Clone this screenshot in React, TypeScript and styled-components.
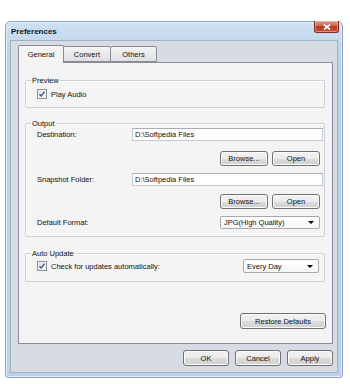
import React from "react";
import styled, { createGlobalStyle } from "styled-components";

const GlobalStyle = createGlobalStyle`
  html, body {
    margin: 0;
    background: #ffffff;
  }
  body {
    font-family: "Liberation Sans", Arial, sans-serif;
    font-size: 7.5px;
    color: #111;
  }
`;

const Window = styled.div`
  box-sizing: border-box;
  width: 338px;
  height: 357px;
  margin: 21px 0 0 5px;
  padding: 0 4px 4px;
  display: flex;
  flex-direction: column;
  border: 1px solid #8ba3c1;
  border-radius: 5px 5px 3px 3px;
  background: linear-gradient(#cfe0f2, #b9d1ea 40px);
  box-shadow: inset 0 0 0 1px #e4eef9;
`;

const TitleBar = styled.div`
  height: 18px;
  display: flex;
  justify-content: space-between;
  align-items: flex-start;
  padding-left: 1px;
`;

const Title = styled.div`
  margin-top: 5px;
  font-size: 8px;
  font-weight: bold;
  line-height: 10px;
  color: #0b1622;
`;

const CloseButton = styled.div`
  box-sizing: border-box;
  width: 25px;
  height: 12px;
  margin: -1px -1px 0 0;
  display: flex;
  align-items: center;
  justify-content: center;
  border: 1px solid #7e2c20;
  border-top: none;
  border-radius: 0 0 3px 3px;
  background: linear-gradient(#e39a8b, #cf6350 45%, #b9341f 52%, #c9553b);
  box-shadow: inset 0 0 0 1px rgba(255, 200, 190, 0.5);
`;

const Client = styled.div`
  box-sizing: border-box;
  flex: 1;
  display: flex;
  flex-direction: column;
  padding: 4px 4px 0 7px;
  border: 1px solid #9fb2c8;
  background: #d7dbe3;
`;

const TabRow = styled.div`
  height: 17px;
  display: flex;
`;

const Tab = styled.div<{ $active?: boolean; $w: number }>`
  box-sizing: border-box;
  position: relative;
  z-index: ${(p) => (p.$active ? 2 : 1)};
  width: ${(p) => p.$w}px;
  height: ${(p) => (p.$active ? 18 : 16)}px;
  margin-top: ${(p) => (p.$active ? 0 : 1)}px;
  display: flex;
  align-items: center;
  justify-content: center;
  border: 1px solid #898c95;
  border-bottom: ${(p) => (p.$active ? "none" : "1px solid #898c95")};
  border-radius: 2px 2px 0 0;
  background: ${(p) =>
    p.$active ? "#f4f4f4" : "linear-gradient(#f3f3f3, #e0e0e0)"};
  & + & {
    margin-left: -1px;
  }
`;

const Panel = styled.div`
  box-sizing: border-box;
  position: relative;
  z-index: 0;
  height: 282px;
  display: flex;
  flex-direction: column;
  border: 1px solid #898c95;
  background: #f4f4f4;
`;

const Group = styled.div<{ $mt: number }>`
  position: relative;
  margin: ${(p) => p.$mt}px 7px 0 6px;
  padding: ${(p) => (p.$mt > 16 ? "7px 0 7px 11px" : "4px 0 7px 11px")};
  border: 1px solid #cdd1d5;
  border-radius: 2px;
  box-shadow: inset 1px 1px 0 #ffffff;
`;

const AutoGroup = styled(Group)`
  padding: 5px 5px 8px 11px;
`;

const Caption = styled.span`
  position: absolute;
  top: -5px;
  left: 5px;
  padding: 0 1px;
  line-height: 9px;
  background: #f4f4f4;
`;

const CheckRow = styled.div<{ $h: number }>`
  height: ${(p) => p.$h}px;
  display: flex;
  align-items: center;
  gap: 4px;
`;

const Box = styled.span`
  box-sizing: border-box;
  width: 10px;
  height: 10px;
  display: flex;
  border: 1px solid #8e8f8f;
  background: linear-gradient(135deg, #d9d9d9, #f7f7f7);
  box-shadow: inset 0 0 0 1px #f4f4f4;
`;

const FieldRow = styled.div<{ $mt: number }>`
  height: 13px;
  margin-top: ${(p) => p.$mt}px;
  display: flex;
  align-items: center;
`;

const FieldLabel = styled.span<{ $grow?: boolean }>`
  width: 95px;
  flex: ${(p) => (p.$grow ? 1 : "none")};
`;

const TextField = styled.input`
  box-sizing: border-box;
  flex: 1;
  min-width: 0;
  height: 13px;
  margin: 0 1px 0 0;
  padding: 0 2px;
  border: 1px solid #c5cad1;
  border-top-color: #abadb3;
  background: #ffffff;
  font: inherit;
  color: #111;
  outline: none;
`;

const ButtonRow = styled.div<{ $mt: number; $pr: number }>`
  margin-top: ${(p) => p.$mt}px;
  padding-right: ${(p) => p.$pr}px;
  display: flex;
  justify-content: flex-end;
  gap: 4px;
`;

const Button = styled.button<{ $w: number; $h: number }>`
  box-sizing: border-box;
  width: ${(p) => p.$w}px;
  height: ${(p) => p.$h}px;
  padding: 0;
  border: 1px solid #707070;
  border-radius: 3px;
  background: linear-gradient(#f2f2f2, #ebebeb 50%, #dddddd 51%, #cfcfcf);
  box-shadow: inset 0 0 0 1px #fcfcfc;
  font: inherit;
  color: #111;
`;

const Select = styled.div<{ $w: number; $h: number; $mr: number }>`
  box-sizing: border-box;
  width: ${(p) => p.$w}px;
  height: ${(p) => p.$h}px;
  margin: 0 ${(p) => p.$mr}px 0 auto;
  padding: 0 5px 0 3px;
  display: flex;
  align-items: center;
  justify-content: space-between;
  border: 1px solid #a9a9a9;
  border-radius: 2px;
  background: linear-gradient(#ffffff, #f6f6f6);
`;

const Arrow = styled.span`
  width: 0;
  height: 0;
  border-left: 3px solid transparent;
  border-right: 3px solid transparent;
  border-top: 3px solid #000;
`;

const RestoreRow = styled.div`
  margin-top: auto;
  padding: 0 6px 14px 0;
  display: flex;
  justify-content: flex-end;
`;

const Footer = styled.div`
  margin-top: 6px;
  display: flex;
  justify-content: flex-end;
  gap: 6px;
`;

const Check = () => (
  <Box>
    <svg width="8" height="8" viewBox="0 0 8 8">
      <path d="M1.5 4.2 L3.2 6 L6.6 1.6" fill="none" stroke="#3b5ca8" strokeWidth="1.4" />
    </svg>
  </Box>
);

export default function App() {
  return (
    <>
      <GlobalStyle />
      <Window>
        <TitleBar>
          <Title>Preferences</Title>
          <CloseButton>
            <svg width="8" height="6" viewBox="0 0 8 6">
              <path d="M1 0.5 L7 5.5 M7 0.5 L1 5.5" stroke="#ffffff" strokeWidth="1.7" />
            </svg>
          </CloseButton>
        </TitleBar>
        <Client>
          <TabRow>
            <Tab $active $w={46}>General</Tab>
            <Tab $w={48}>Convert</Tab>
            <Tab $w={47}>Others</Tab>
          </TabRow>
          <Panel>
            <Group $mt={17}>
              <Caption>Preview</Caption>
              <CheckRow $h={12}>
                <Check />
                Play Audio
              </CheckRow>
            </Group>
            <Group $mt={15}>
              <Caption>Output</Caption>
              <FieldRow $mt={0}>
                <FieldLabel>Destination:</FieldLabel>
                <TextField readOnly value="D:\Softpedia Files" />
              </FieldRow>
              <ButtonRow $mt={10} $pr={4}>
                <Button $w={48} $h={15}>Browse...</Button>
                <Button $w={48} $h={15}>Open</Button>
              </ButtonRow>
              <FieldRow $mt={7}>
                <FieldLabel>Snapshot Folder:</FieldLabel>
                <TextField readOnly value="D:\Softpedia Files" />
              </FieldRow>
              <ButtonRow $mt={8} $pr={4}>
                <Button $w={48} $h={15}>Browse...</Button>
                <Button $w={48} $h={15}>Open</Button>
              </ButtonRow>
              <FieldRow $mt={7}>
                <FieldLabel $grow>Default Format:</FieldLabel>
                <Select $w={100} $h={13} $mr={4}>
                  JPG(High Quality)
                  <Arrow />
                </Select>
              </FieldRow>
            </Group>
            <AutoGroup $mt={16}>
              <Caption>Auto Update</Caption>
              <CheckRow $h={14}>
                <Check />
                Check for updates automatically:
                <Select $w={76} $h={14} $mr={0}>
                  Every Day
                  <Arrow />
                </Select>
              </CheckRow>
            </AutoGroup>
            <RestoreRow>
              <Button $w={86} $h={16}>Restore Defaults</Button>
            </RestoreRow>
          </Panel>
          <Footer>
            <Button $w={46} $h={16}>OK</Button>
            <Button $w={46} $h={16}>Cancel</Button>
            <Button $w={46} $h={16}>Apply</Button>
          </Footer>
        </Client>
      </Window>
    </>
  );
}
